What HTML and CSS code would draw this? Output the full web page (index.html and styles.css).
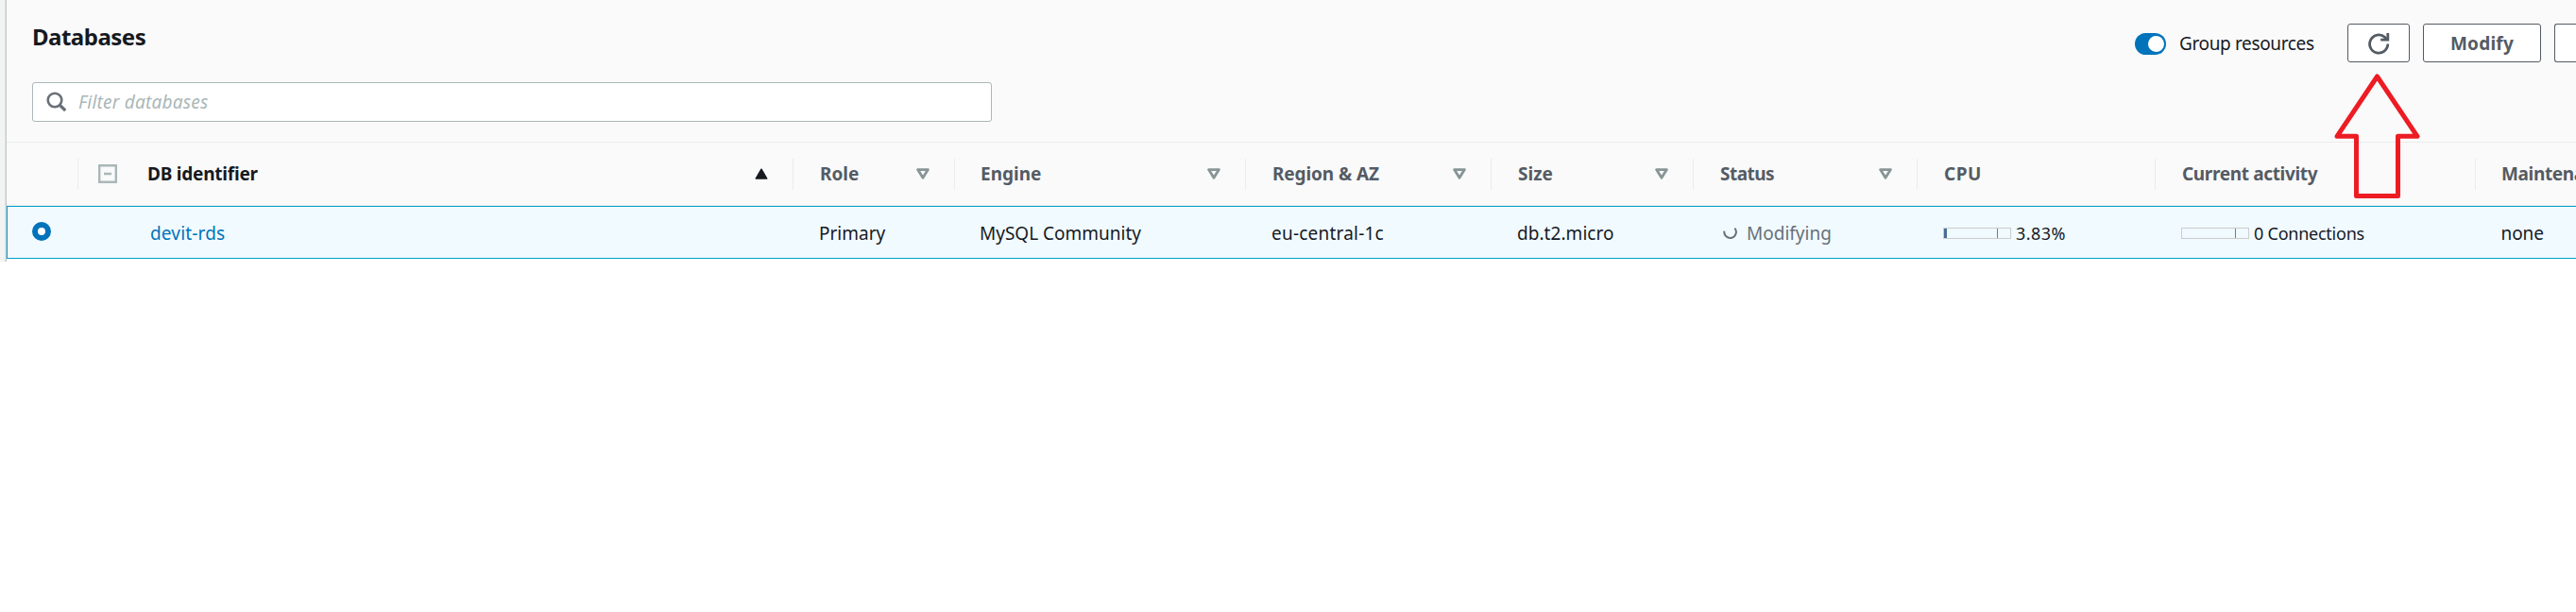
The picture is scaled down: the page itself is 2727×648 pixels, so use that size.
FILE: index.html
```html
<!DOCTYPE html>
<html lang="en">
<head>
<meta charset="utf-8">
<title>Databases</title>
<link rel="stylesheet" href="styles.css">
</head>
<body>
<svg class="defs" width="0" height="0" aria-hidden="true">
  <symbol id="sort" viewBox="0 0 14 12"><path d="M1.6 1.6h10.8L7 10.2z" fill="none" stroke="#879596" stroke-width="2.8" stroke-linejoin="round"/></symbol>
</svg>
<main class="panel">
  <header class="toolbar">
    <div class="heading">
      <h1 class="title">Databases</h1>
      <label class="search">
        <svg width="22" height="22" viewBox="0 0 22 22"><circle cx="9" cy="9" r="7.3" fill="none" stroke="#687078" stroke-width="2.6"/><path d="M14 14l6.2 6" stroke="#687078" stroke-width="3.2"/></svg>
        <span class="placeholder">Filter databases</span>
      </label>
    </div>
    <div class="actions">
      <span class="toggle"><i class="knob"></i></span>
      <span class="toggle-label">Group resources</span>
      <button class="btn refresh"><svg width="24" height="24" viewBox="0 0 24 24" fill="none" stroke="#545b64" stroke-width="2.8"><path d="M21.8 12.6A9.6 9.6 0 1 1 18.6 5.4L20.6 7.4"/><path d="M21.8 1v7.2h-7.6"/></svg></button>
      <button class="btn modify">Modify</button>
      <button class="btn more"></button>
    </div>
  </header>
  <div class="row head">
    <div class="th"></div>
    <div class="th db"><svg class="minus" width="20" height="20" viewBox="0 0 20 20"><path d="M1.2 1.2h17.6v17.6H1.2zM6 10h8" fill="none" stroke="#aab7b8" stroke-width="2.4"/></svg><span class="t-id">DB identifier</span><svg class="arrow" width="14" height="12" viewBox="0 0 14 12"><path d="M7 1.2L12.8 11H1.2z" fill="#16191f" stroke="#16191f" stroke-width="1.4" stroke-linejoin="round"/></svg></div>
    <div class="th"><span>Role</span><svg class="arrow" width="14" height="12"><use href="#sort"/></svg></div>
    <div class="th engine"><span>Engine</span><svg class="arrow" width="14" height="12"><use href="#sort"/></svg></div>
    <div class="th"><span class="t-region">Region &amp; AZ</span><svg class="arrow" width="14" height="12"><use href="#sort"/></svg></div>
    <div class="th"><span class="t-size">Size</span><svg class="arrow" width="14" height="12"><use href="#sort"/></svg></div>
    <div class="th"><span class="t-status">Status</span><svg class="arrow" width="14" height="12"><use href="#sort"/></svg></div>
    <div class="th"><span class="t-cpu">CPU</span></div>
    <div class="th"><span class="t-activity">Current activity</span></div>
    <div class="th maint"><span class="t-maint">Maintenance</span></div>
  </div>
  <div class="row item">
    <div class="td pick"><svg width="20" height="20" viewBox="0 0 20 20"><circle cx="10" cy="10" r="7" fill="#fff" stroke="#0073bb" stroke-width="6"/></svg></div>
    <div class="td name"><a class="v-name">devit-rds</a></div>
    <div class="td"><span>Primary</span></div>
    <div class="td engine"><span>MySQL Community</span></div>
    <div class="td"><span class="v-region">eu-central-1c</span></div>
    <div class="td"><span class="v-size">db.t2.micro</span></div>
    <div class="td status"><svg width="16" height="16" viewBox="0 0 16 16"><path d="M1.4 5.6A6.3 6.3 0 1 0 12.4 2.6" fill="none" stroke="#687078" stroke-width="2"/></svg><span>Modifying</span></div>
    <div class="td"><span class="meter"><i class="fill"></i><i class="limit"></i></span><span class="v-cpu">3.83%</span></div>
    <div class="td"><span class="meter"><i class="limit"></i></span><span class="v-activity">0 Connections</span></div>
    <div class="td maint"><span class="v-maint">none</span></div>
  </div>
  <svg class="pointer" width="94" height="134" viewBox="0 0 94 134"><path d="M46.5 4L89 67.3H68.5V130.4H24.5V67.3H4z" fill="none" stroke="#ed1c24" stroke-width="5" stroke-linejoin="round"/></svg>
</main>
</body>
</html>
```
FILE: styles.css
```css
* { box-sizing: border-box; }
body {
  margin: 0;
  background: #fff;
  color: #16191f;
  font: 19px/26px "Noto Sans", "Open Sans", sans-serif;
  overflow: hidden;
}
svg { display: block; flex: none; }
.defs { position: absolute; }
.panel {
  position: relative;
  width: 2727px;
  height: 277px;
  padding-left: 7px;
  background: linear-gradient(90deg, #f2f3f3 5px, #dfe3e4 5px, #dfe3e4 6px, #c0c6ca 6px, #c0c6ca 7px, #fff 7px);
  overflow: hidden;
}
.toolbar {
  display: flex;
  justify-content: space-between;
  height: 151px;
  padding-left: 27px;
  background: #fafafa;
  border-bottom: 1px solid #eaeded;
}
.heading { padding-top: 22px; }
.title {
  margin: 0 0 31px;
  font-size: 24px;
  line-height: 34px;
  letter-spacing: -.5px;
}
.search {
  display: flex;
  align-items: center;
  gap: 12px;
  width: 1016px;
  height: 42px;
  padding-left: 14px;
  background: #fff;
  border: 1px solid #aab7b8;
  border-radius: 3px;
}
.placeholder { color: #aab7b8; font-style: italic; letter-spacing: .23px; }
.actions {
  display: flex;
  align-items: center;
  height: 41px;
  margin-top: 25px;
}
.toggle {
  display: flex;
  justify-content: flex-end;
  align-items: center;
  width: 33px;
  height: 23px;
  padding-right: 2px;
  margin: 2px 14px 0 0;
  border-radius: 12px;
  background: #0073bb;
}
.knob { width: 17px; height: 17px; border-radius: 50%; background: #fff; }
.toggle-label { width: 178px; padding-top: 1px; letter-spacing: -.36px; white-space: nowrap; }
.btn {
  display: flex;
  align-items: center;
  justify-content: center;
  height: 41px;
  margin: 0 14px 0 0;
  padding: 0;
  background: #fff;
  border: 1px solid #545b64;
  border-radius: 3px;
  color: #545b64;
  font: 700 19px/26px "Noto Sans", "Open Sans", sans-serif;
  letter-spacing: .23px;
}
.refresh { width: 66px; }
.modify { width: 125px; }
.more { width: 23px; margin-right: 0; border-right: 0; border-radius: 3px 0 0 3px; }
.row {
  display: grid;
  grid-template-columns: 75px 757px 171px 308px 260px 214px 237px 252px 339px 107px;
  align-items: center;
}
.head {
  height: 67px;
  background: #fafafa;
  border-bottom: 1px solid #eaeded;
  color: #545b64;
  font-weight: 700;
}
.th {
  display: flex;
  align-items: center;
  height: 33px;
  padding: 0 26px 0 28px;
  border-left: 1px solid #eaeded;
  white-space: nowrap;
}
.th:first-child { border-left: 0; }
.th.engine { padding-left: 27px; }
.th.maint { padding-left: 27px; }
.th.db { padding: 0 26px 0 21px; gap: 32px; color: #16191f; }
.arrow { margin-left: auto; }
.item {
  height: 56px;
  background: #f1faff;
  box-shadow: inset 1px 0 #00a1c9, inset 0 1px #00a1c9, inset 0 -1px #00a1c9;
}
.td { display: flex; align-items: center; padding: 1px 0 0 28px; white-space: nowrap; }
.td.pick { padding: 0 0 2px 27px; }
.td.name { padding-left: 77px; color: #0073bb; }
.td.engine { padding-left: 27px; }
.td.maint { padding-left: 27.5px; }
.td.status { padding-left: 32px; gap: 9px; color: #687078; }
.meter {
  display: flex;
  justify-content: space-between;
  width: 72px;
  height: 12px;
  margin-right: 5px;
  padding-right: 13px;
  border: 1px solid #ccc;
}
.fill { width: 3px; background: #486f91; }
.limit { width: 1px; margin-left: auto; background: #d9534f; }
.t-id { letter-spacing: -.22px; }
.t-region { letter-spacing: -.1px; }
.t-status { letter-spacing: -.54px; }
.t-cpu { letter-spacing: .5px; }
.t-activity, .t-maint { letter-spacing: -.35px; }
.v-name { letter-spacing: .16px; }
.v-region { letter-spacing: .21px; }
.v-size { letter-spacing: .05px; }
.v-cpu { font-size: 18px; letter-spacing: .45px; }
.v-activity { font-size: 18px; letter-spacing: -.24px; }
.v-maint { letter-spacing: -.1px; }
.pointer { position: absolute; left: 2470px; top: 77px; }
```
